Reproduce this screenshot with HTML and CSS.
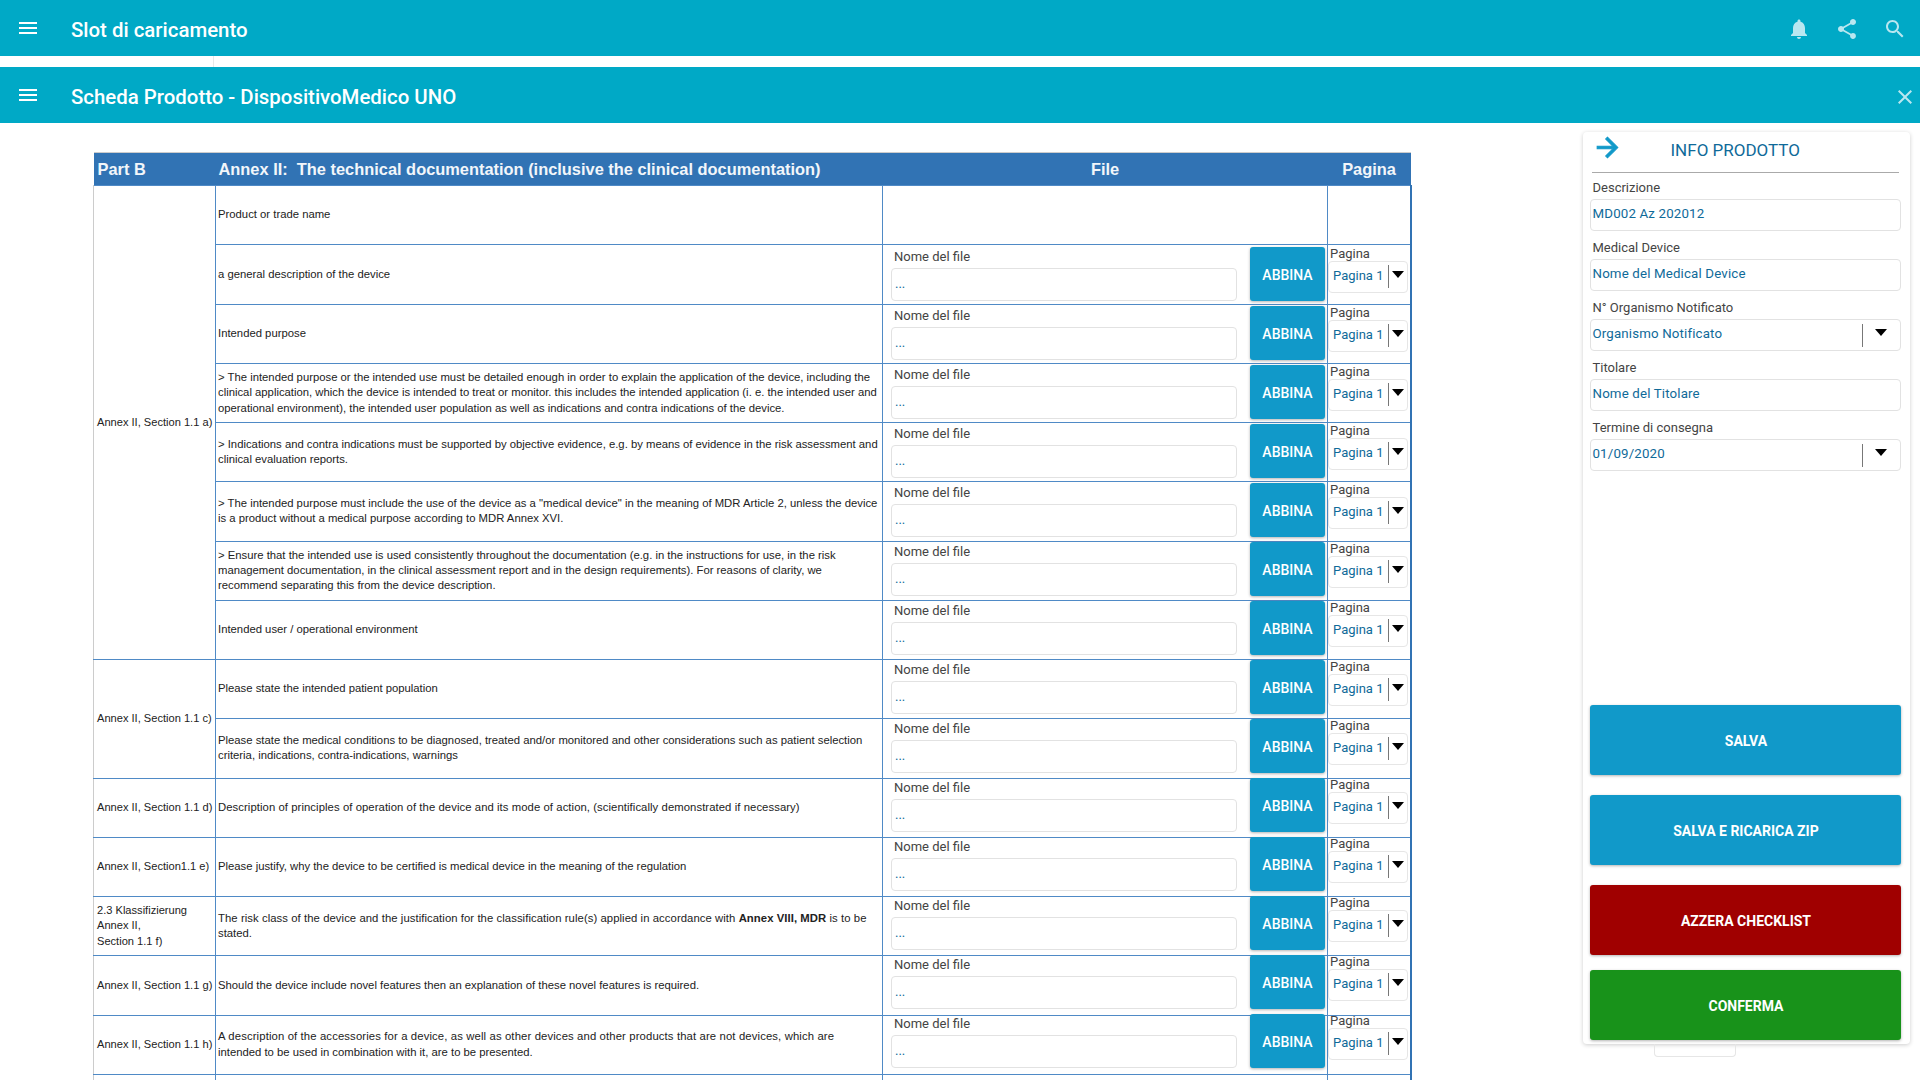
FILE: index.html
```html
<!DOCTYPE html>
<html lang="it">
<head>
  <meta charset="UTF-8">
  <title>Scheda Prodotto - DispositivoMedico UNO</title>
  <link rel="stylesheet" href="styles.css">
</head>
<body>

<header class="bar">
  <svg class="icon icon-menu" viewBox="0 0 24 24"><path d="M3 18h18v-2H3v2zm0-5h18v-2H3v2zm0-7v2h18V6H3z"/></svg>
  <h1 class="bar-title">Slot di caricamento</h1>
  <div class="bar-actions">
    <svg class="icon" viewBox="0 0 24 24"><path d="M12 22c1.1 0 2-.9 2-2h-4c0 1.1.9 2 2 2zm6-6v-5c0-3.07-1.63-5.64-4.5-6.32V4c0-.83-.67-1.5-1.5-1.5s-1.5.67-1.5 1.5v.68C7.64 5.36 6 7.92 6 11v5l-2 2v1h16v-1l-2-2z"/></svg>
    <svg class="icon" viewBox="0 0 24 24"><path d="M18 16.08c-.76 0-1.44.3-1.96.77L8.91 12.7c.05-.23.09-.46.09-.7s-.04-.47-.09-.7l7.05-4.11c.54.5 1.25.81 2.04.81 1.66 0 3-1.34 3-3s-1.34-3-3-3-3 1.34-3 3c0 .24.04.47.09.7L8.04 9.81C7.5 9.31 6.79 9 6 9c-1.66 0-3 1.34-3 3s1.34 3 3 3c.79 0 1.5-.31 2.04-.81l7.12 4.16c-.05.21-.08.43-.08.65 0 1.61 1.31 2.92 2.92 2.92s2.92-1.31 2.92-2.92-1.31-2.92-2.92-2.92z"/></svg>
    <svg class="icon" viewBox="0 0 24 24"><path d="M15.5 14h-.79l-.28-.27C15.41 12.59 16 11.11 16 9.5 16 5.91 13.09 3 9.500 3S3 5.910 3 9.500 5.910 16 9.500 16c1.610 0 3.090-.59 4.230-1.570l.27.28v.79l5 4.990L20.490 19l-4.990-5zm-6 0C7.010 14 5 11.990 5 9.500S7.010 5 9.500 5 14 7.010 14 9.500 11.990 14 9.500 14z"/></svg>
  </div>
</header>
<div class="strip"><span class="strip-line"></span></div>

<header class="bar">
  <svg class="icon icon-menu" viewBox="0 0 24 24"><path d="M3 18h18v-2H3v2zm0-5h18v-2H3v2zm0-7v2h18V6H3z"/></svg>
  <h2 class="bar-title">Scheda Prodotto - DispositivoMedico UNO</h2>
  <div class="bar-close">
    <svg class="icon" viewBox="0 0 24 24"><path d="M19 6.410L17.590 5 12 10.590 6.410 5 5 6.410 10.590 12 5 17.590 6.410 19 12 13.410 17.590 19 19 17.590 13.410 12z"/></svg>
  </div>
</header>

<div class="content">
  <main class="checklist">
    <table class="doc-table">
      <colgroup>
        <col class="col-ref"><col class="col-desc"><col class="col-file"><col class="col-page">
      </colgroup>
      <thead>
        <tr>
          <th>Part B</th>
          <th>Annex II:&nbsp; The technical documentation (inclusive the clinical documentation)</th>
          <th class="center">File</th>
          <th class="center">Pagina</th>
        </tr>
      </thead>
      <tbody>
        <tr>
          <td class="ref" rowspan="8">Annex II, Section 1.1 a)</td>
          <td class="desc">Product or trade name</td>
          <td></td><td></td>
        </tr>
        <tr>
          <td class="desc">a general description of the device</td>
          <td></td><td></td>
        </tr>
        <tr>
          <td class="desc">Intended purpose</td>
          <td></td><td></td>
        </tr>
        <tr>
          <td class="desc">&gt; The intended purpose or the intended use must be detailed enough in order to explain the application of the device, including the<br>clinical application, which the device is intended to treat or monitor. this includes the intended application (i. e. the intended user and<br>operational environment), the intended user population as well as indications and contra indications of the device.</td>
          <td></td><td></td>
        </tr>
        <tr>
          <td class="desc">&gt; Indications and contra indications must be supported by objective evidence, e.g. by means of evidence in the risk assessment and<br>clinical evaluation reports.</td>
          <td></td><td></td>
        </tr>
        <tr>
          <td class="desc">&gt; The intended purpose must include the use of the device as a "medical device" in the meaning of MDR Article 2, unless the device<br>is a product without a medical purpose according to MDR Annex XVI.</td>
          <td></td><td></td>
        </tr>
        <tr>
          <td class="desc">&gt; Ensure that the intended use is used consistently throughout the documentation (e.g. in the instructions for use, in the risk<br>management documentation, in the clinical assessment report and in the design requirements). For reasons of clarity, we<br>recommend separating this from the device description.</td>
          <td></td><td></td>
        </tr>
        <tr>
          <td class="desc">Intended user / operational environment</td>
          <td></td><td></td>
        </tr>
        <tr>
          <td class="ref" rowspan="2">Annex II, Section 1.1 c)</td>
          <td class="desc">Please state the intended patient population</td>
          <td></td><td></td>
        </tr>
        <tr>
          <td class="desc">Please state the medical conditions to be diagnosed, treated and/or monitored and other considerations such as patient selection<br>criteria, indications, contra-indications, warnings</td>
          <td></td><td></td>
        </tr>
        <tr>
          <td class="ref">Annex II, Section 1.1 d)</td>
          <td class="desc"><span class="track">Description of principles of operation of the device and its mode of action, (scientifically demonstrated if necessary)</span></td>
          <td></td><td></td>
        </tr>
        <tr>
          <td class="ref">Annex II, Section1.1 e)</td>
          <td class="desc">Please justify, why the device to be certified is medical device in the meaning of the regulation</td>
          <td></td><td></td>
        </tr>
        <tr>
          <td class="ref">2.3 Klassifizierung<br>Annex II,<br>Section 1.1 f)</td>
          <td class="desc"><span class="track">The risk class of the device and the justification for the classification rule(s) applied in accordance with <b>Annex VIII, MDR</b> is to be</span><br>stated.</td>
          <td></td><td></td>
        </tr>
        <tr>
          <td class="ref">Annex II, Section 1.1 g)</td>
          <td class="desc">Should the device include novel features then an explanation of these novel features is required.</td>
          <td></td><td></td>
        </tr>
        <tr>
          <td class="ref">Annex II, Section 1.1 h)</td>
          <td class="desc"><span class="track-wide">A description of the accessories for a device, as well as other devices and other products that are not devices, which are</span><br>intended to be used in combination with it, are to be presented.</td>
          <td></td><td></td>
        </tr>
        <tr>
          <td class="ref"></td>
          <td class="desc"></td>
          <td></td><td></td>
        </tr>
      </tbody>
    </table>

    <!-- the form sits over the table, it has its own 59px rhythm -->
    <form class="form-rows">
      <div class="form-row"><div class="file-field"><div class="file-label">Nome del file</div><div class="file-input">...</div></div><button type="button" class="btn-abbina">ABBINA</button><div class="page-field"><div class="page-label">Pagina</div><div class="page-select"><span class="page-value">Pagina 1</span><span class="caret-box"><i class="caret"></i></span></div></div></div>
      <div class="form-row"><div class="file-field"><div class="file-label">Nome del file</div><div class="file-input">...</div></div><button type="button" class="btn-abbina">ABBINA</button><div class="page-field"><div class="page-label">Pagina</div><div class="page-select"><span class="page-value">Pagina 1</span><span class="caret-box"><i class="caret"></i></span></div></div></div>
      <div class="form-row"><div class="file-field"><div class="file-label">Nome del file</div><div class="file-input">...</div></div><button type="button" class="btn-abbina">ABBINA</button><div class="page-field"><div class="page-label">Pagina</div><div class="page-select"><span class="page-value">Pagina 1</span><span class="caret-box"><i class="caret"></i></span></div></div></div>
      <div class="form-row"><div class="file-field"><div class="file-label">Nome del file</div><div class="file-input">...</div></div><button type="button" class="btn-abbina">ABBINA</button><div class="page-field"><div class="page-label">Pagina</div><div class="page-select"><span class="page-value">Pagina 1</span><span class="caret-box"><i class="caret"></i></span></div></div></div>
      <div class="form-row"><div class="file-field"><div class="file-label">Nome del file</div><div class="file-input">...</div></div><button type="button" class="btn-abbina">ABBINA</button><div class="page-field"><div class="page-label">Pagina</div><div class="page-select"><span class="page-value">Pagina 1</span><span class="caret-box"><i class="caret"></i></span></div></div></div>
      <div class="form-row"><div class="file-field"><div class="file-label">Nome del file</div><div class="file-input">...</div></div><button type="button" class="btn-abbina">ABBINA</button><div class="page-field"><div class="page-label">Pagina</div><div class="page-select"><span class="page-value">Pagina 1</span><span class="caret-box"><i class="caret"></i></span></div></div></div>
      <div class="form-row"><div class="file-field"><div class="file-label">Nome del file</div><div class="file-input">...</div></div><button type="button" class="btn-abbina">ABBINA</button><div class="page-field"><div class="page-label">Pagina</div><div class="page-select"><span class="page-value">Pagina 1</span><span class="caret-box"><i class="caret"></i></span></div></div></div>
      <div class="form-row"><div class="file-field"><div class="file-label">Nome del file</div><div class="file-input">...</div></div><button type="button" class="btn-abbina">ABBINA</button><div class="page-field"><div class="page-label">Pagina</div><div class="page-select"><span class="page-value">Pagina 1</span><span class="caret-box"><i class="caret"></i></span></div></div></div>
      <div class="form-row"><div class="file-field"><div class="file-label">Nome del file</div><div class="file-input">...</div></div><button type="button" class="btn-abbina">ABBINA</button><div class="page-field"><div class="page-label">Pagina</div><div class="page-select"><span class="page-value">Pagina 1</span><span class="caret-box"><i class="caret"></i></span></div></div></div>
      <div class="form-row"><div class="file-field"><div class="file-label">Nome del file</div><div class="file-input">...</div></div><button type="button" class="btn-abbina">ABBINA</button><div class="page-field"><div class="page-label">Pagina</div><div class="page-select"><span class="page-value">Pagina 1</span><span class="caret-box"><i class="caret"></i></span></div></div></div>
      <div class="form-row"><div class="file-field"><div class="file-label">Nome del file</div><div class="file-input">...</div></div><button type="button" class="btn-abbina">ABBINA</button><div class="page-field"><div class="page-label">Pagina</div><div class="page-select"><span class="page-value">Pagina 1</span><span class="caret-box"><i class="caret"></i></span></div></div></div>
      <div class="form-row"><div class="file-field"><div class="file-label">Nome del file</div><div class="file-input">...</div></div><button type="button" class="btn-abbina">ABBINA</button><div class="page-field"><div class="page-label">Pagina</div><div class="page-select"><span class="page-value">Pagina 1</span><span class="caret-box"><i class="caret"></i></span></div></div></div>
      <div class="form-row"><div class="file-field"><div class="file-label">Nome del file</div><div class="file-input">...</div></div><button type="button" class="btn-abbina">ABBINA</button><div class="page-field"><div class="page-label">Pagina</div><div class="page-select"><span class="page-value">Pagina 1</span><span class="caret-box"><i class="caret"></i></span></div></div></div>
      <div class="form-row"><div class="file-field"><div class="file-label">Nome del file</div><div class="file-input">...</div></div><button type="button" class="btn-abbina">ABBINA</button><div class="page-field"><div class="page-label">Pagina</div><div class="page-select"><span class="page-value">Pagina 1</span><span class="caret-box"><i class="caret"></i></span></div></div></div>
    </form>
  </main>

  <aside class="sidebar">
    <div class="panel">
      <div class="panel-head">
        <svg class="panel-arrow" viewBox="0 0 24 24"><path d="M12 4l-1.410 1.410L16.170 11H4v2h12.170l-5.580 5.590L12 20l8-8z"/></svg>
        <span class="panel-title">INFO PRODOTTO</span>
      </div>
      <div class="field">
        <div class="field-label">Descrizione</div>
        <div class="field-box"><span class="field-value">MD002 Az 202012</span></div>
      </div>
      <div class="field">
        <div class="field-label">Medical Device</div>
        <div class="field-box"><span class="field-value">Nome del Medical Device</span></div>
      </div>
      <div class="field">
        <div class="field-label">N° Organismo Notificato</div>
        <div class="field-box"><span class="field-value">Organismo Notificato</span><span class="field-caret"><i class="caret"></i></span></div>
      </div>
      <div class="field">
        <div class="field-label">Titolare</div>
        <div class="field-box"><span class="field-value">Nome del Titolare</span></div>
      </div>
      <div class="field">
        <div class="field-label">Termine di consegna</div>
        <div class="field-box"><span class="field-value">01/09/2020</span><span class="field-caret"><i class="caret"></i></span></div>
      </div>
      <div class="actions">
        <button class="action blue">SALVA</button>
        <button class="action blue">SALVA E RICARICA ZIP</button>
        <button class="action red">AZZERA CHECKLIST</button>
        <button class="action green">CONFERMA</button>
      </div>
    </div>
    <div class="panel-tab"></div>
  </aside>
</div>

</body>
</html>
```

FILE: styles.css
```css
body {
  margin: 0;
  height: 100vh;
  overflow: hidden;
  background: #fff;
  font-family: Roboto, sans-serif;
}

/* top bars */
.bar {
  display: flex;
  align-items: center;
  height: 56px;
  padding-left: 16px;
  background: #00a9c6;
  color: #fff;
}

.bar-title {
  margin: 4px 0 0 31px;
  font-size: 20.4px;
  font-weight: 500;
}

.icon {
  display: block;
  width: 24px;
  height: 24px;
  fill: #b9e7f0;
}

.icon-menu {
  fill: #fff;
}

.bar-actions {
  display: flex;
  gap: 24px;
  margin: 2px 0 0 auto;
  padding-right: 13px;
}

.bar-close {
  margin: 4px 0 0 auto;
  padding-right: 3px;
}

.strip {
  height: 11px;
  padding-left: 213px;
}

.strip-line {
  display: block;
  width: 1px;
  height: 100%;
  background: #e8e8e8;
}

/* layout below the bars */
.content {
  display: flex;
  align-items: flex-start;
  height: calc(100vh - 123px);
  overflow: hidden;
}

.checklist {
  position: relative;
  padding: 29px 0 0 93px;
}

.sidebar {
  margin: 9px 0 0 171px;
}

/* table */
.doc-table {
  width: 1317px;
  table-layout: fixed;
  border-collapse: collapse;
  font-family: "Liberation Sans", Arial, sans-serif;
  color: #222;
}

.col-ref { width: 122px; }
.col-desc { width: 667px; }
.col-file { width: 445px; }
.col-page { width: 83px; }

.doc-table th {
  box-sizing: border-box;
  height: 33px;
  padding: 1px 3px 0;
  border-top: 1px solid #ccc;
  background: #3173b4;
  color: #f2f6fa;
  font-size: 16.4px;
  font-weight: bold;
  text-align: left;
}

.doc-table th:first-child {
  padding-left: 4px;
}

.doc-table th.center {
  text-align: center;
}

.doc-table td {
  height: 59.25px;
  padding: 0;
  border: 1px solid #4f8ac6;
  box-sizing: border-box;
  vertical-align: top;
}

.doc-table td:first-child {
  border-left: 1px solid #ccc;
}

.doc-table td:last-child {
  border-right: 2px solid #3173b4;
}

.doc-table td.ref,
.doc-table td.desc {
  padding: 0 1px 0 2px;
  font-size: 11.3px;
  line-height: 15.3px;
  vertical-align: middle;
}

.doc-table td.ref {
  padding-left: 3px;
  font-size: 11.1px;
}

.track {
  letter-spacing: 0.07px;
}

.track-wide {
  letter-spacing: 0.13px;
}

/* form over the file and page columns */
.form-rows {
  position: absolute;
  top: 121px;
  left: 882px;
  width: 528px;
}

.form-row {
  display: flex;
  align-items: flex-start;
  box-sizing: border-box;
  height: 59px;
  padding: 3px 0 0 9px;
}

.file-field {
  width: 346px;
}

.file-label {
  margin-bottom: 2px;
  padding-left: 3px;
  color: #444;
  font-size: 13px;
  line-height: 19px;
}

.file-input {
  box-sizing: border-box;
  height: 33px;
  padding: 7px 3px 0;
  border: 1px solid #e2e2e2;
  border-radius: 4px;
  color: #0f6a99;
  font-size: 13px;
}

.btn-abbina {
  flex: none;
  width: 75px;
  height: 54px;
  margin-left: 13px;
  padding: 2px 0 0;
  border: none;
  border-radius: 3px;
  background: #1199c9;
  color: #fff;
  font-family: Roboto, sans-serif;
  font-size: 14px;
  font-weight: 500;
  box-shadow: 0 1px 3px rgba(0, 0, 0, 0.3);
}

.page-field {
  margin-left: 3px;
}

.page-label {
  padding-left: 2px;
  color: #444;
  font-size: 13px;
  line-height: 14px;
}

.page-select {
  display: flex;
  box-sizing: border-box;
  width: 80px;
  height: 32px;
  border: 1px solid #e6e6e6;
  border-radius: 4px;
}

.page-value {
  box-sizing: border-box;
  width: 59px;
  padding: 6px 0 0 4px;
  color: #0f6a99;
  font-size: 13px;
  line-height: 16px;
  white-space: nowrap;
}

.caret-box {
  box-sizing: border-box;
  width: 19px;
  height: 23px;
  margin-top: 3px;
  padding: 6px 0 0 3px;
  border-left: 1px solid #777;
}

.caret {
  display: block;
  width: 0;
  height: 0;
  border-top: 7px solid #000;
  border-left: 6px solid transparent;
  border-right: 6px solid transparent;
}

/* right panel */
.panel {
  box-sizing: border-box;
  display: flex;
  flex-direction: column;
  width: 327px;
  height: 912px;
  padding: 0 9px 4px 7px;
  border-radius: 4px;
  background: #fff;
  box-shadow: 0 1px 4px rgba(0, 0, 0, 0.2);
}

.panel-head {
  box-sizing: border-box;
  display: flex;
  align-items: flex-start;
  height: 41px;
  margin: 0 2px;
  border-bottom: 1px solid #aaa;
}

.panel-arrow {
  flex: none;
  width: 31px;
  height: 31px;
  fill: #1199c9;
  stroke: #1199c9;
  stroke-width: 0.8;
}

.panel-title {
  margin: 7px 0 0 48px;
  color: #0f6a99;
  font-size: 17px;
  line-height: 22px;
}

.field {
  padding: 4px 0 2px;
}

.field-label {
  margin-bottom: 2px;
  padding: 1px 0 0 3px;
  color: #444;
  font-size: 13px;
  line-height: 19px;
}

.field-box {
  box-sizing: border-box;
  display: flex;
  height: 32px;
  padding-left: 2px;
  border: 1px solid #e2e2e2;
  border-radius: 4px;
}

.field-value {
  flex: 1;
  padding-top: 4px;
  color: #0f6a99;
  font-size: 13.3px;
  letter-spacing: 0.15px;
  line-height: 20px;
}

.field-caret {
  box-sizing: border-box;
  width: 38px;
  height: 23px;
  margin-top: 4px;
  padding: 5px 0 0 12px;
  border-left: 1px solid #777;
}

.actions {
  display: flex;
  flex-direction: column;
  gap: 20px;
  margin-top: auto;
}

.action {
  height: 70px;
  padding: 2px 0 0 2px;
  border: none;
  border-radius: 3px;
  color: #fff;
  font-family: Roboto, sans-serif;
  font-size: 14px;
  font-weight: 700;
  box-shadow: 0 1px 3px rgba(0, 0, 0, 0.3);
}

.action.green {
  margin-top: -5px;
}

.blue { background: #1199c9; }
.red { background: #a00000; }
.green { background: #18921a; }

.panel-tab {
  box-sizing: border-box;
  width: 82px;
  height: 13px;
  margin-left: 71px;
  border: 1px solid #e6e6e6;
  border-top: none;
  border-radius: 0 0 4px 4px;
}
```
